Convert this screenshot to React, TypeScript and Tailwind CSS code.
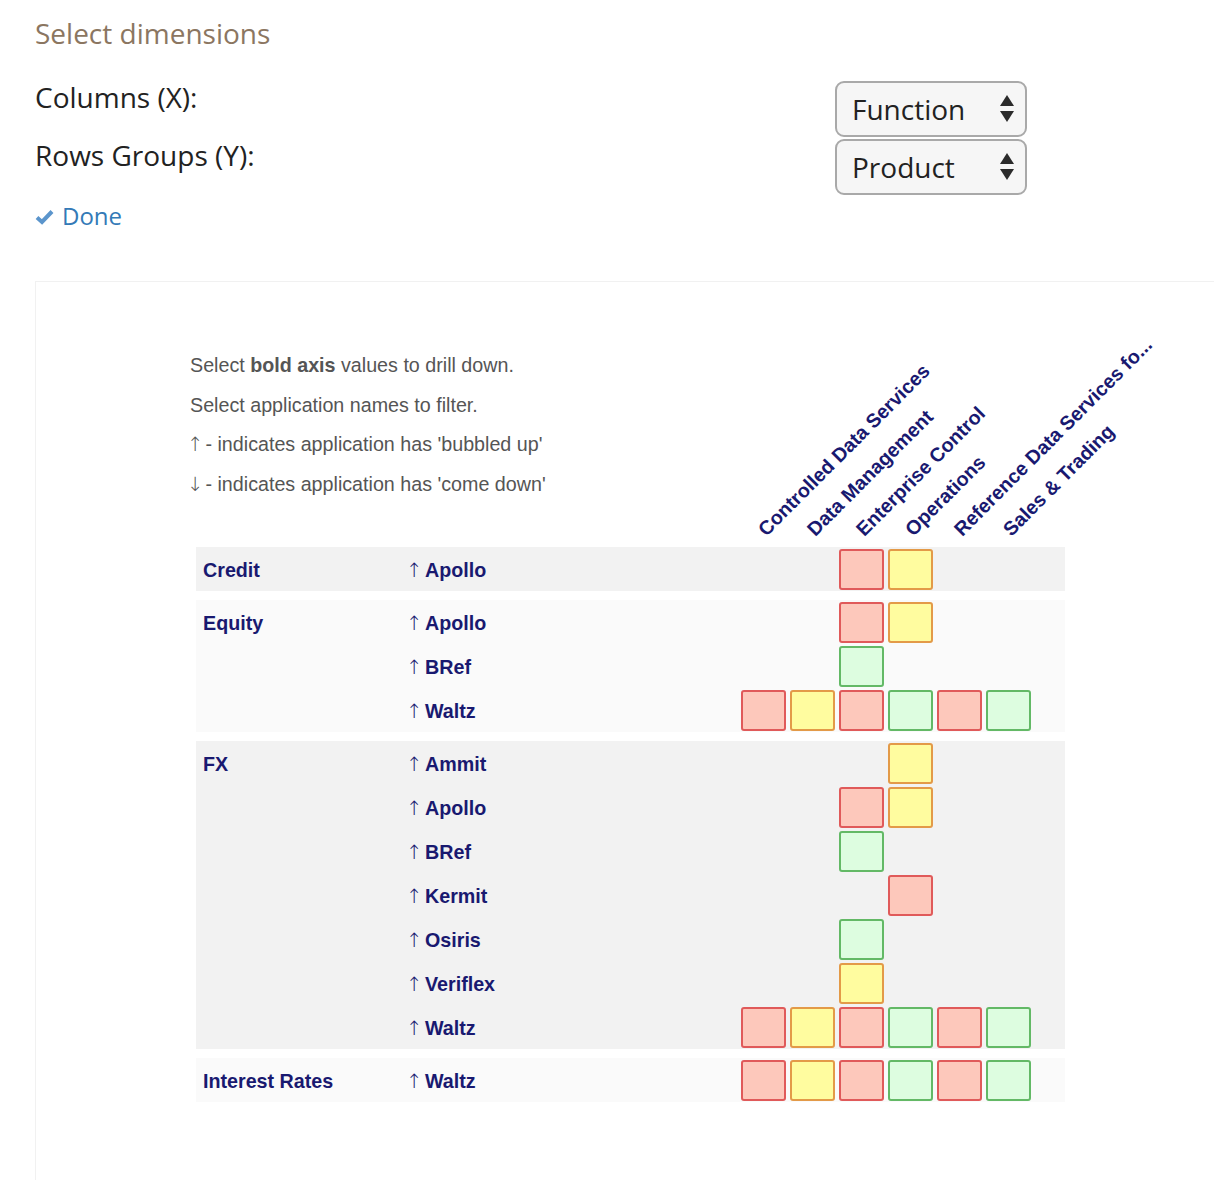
import React from "react";

type C = "r" | "y" | "g" | null;

const columns = [
  "Controlled Data Services",
  "Data Management",
  "Enterprise Control",
  "Operations",
  "Reference Data Services fo...",
  "Sales & Trading",
];

const W: C[] = ["r", "y", "r", "g", "r", "g"];

const groups: { name: string; bg: string; rows: { app: string; cells: C[] }[] }[] = [
  {
    name: "Credit",
    bg: "bg-[#f2f2f2]",
    rows: [{ app: "Apollo", cells: [null, null, "r", "y", null, null] }],
  },
  {
    name: "Equity",
    bg: "bg-[#fafafa]",
    rows: [
      { app: "Apollo", cells: [null, null, "r", "y", null, null] },
      { app: "BRef", cells: [null, null, "g", null, null, null] },
      { app: "Waltz", cells: W },
    ],
  },
  {
    name: "FX",
    bg: "bg-[#f2f2f2]",
    rows: [
      { app: "Ammit", cells: [null, null, null, "y", null, null] },
      { app: "Apollo", cells: [null, null, "r", "y", null, null] },
      { app: "BRef", cells: [null, null, "g", null, null, null] },
      { app: "Kermit", cells: [null, null, null, "r", null, null] },
      { app: "Osiris", cells: [null, null, "g", null, null, null] },
      { app: "Veriflex", cells: [null, null, "y", null, null, null] },
      { app: "Waltz", cells: W },
    ],
  },
  {
    name: "Interest Rates",
    bg: "bg-[#fafafa]",
    rows: [{ app: "Waltz", cells: W }],
  },
];

const cellClass: Record<string, string> = {
  r: "bg-[#fdc8bb] border-[#e05a5a]",
  y: "bg-[#fffc9f] border-[#e39a48]",
  g: "bg-[#ddfde0] border-[#63b966]",
};

function Arrows() {
  return (
    <svg width="16" height="30" viewBox="0 0 16 30" className="shrink-0">
      <polygon points="8,1 15,12 1,12" fill="#2b2b2b" />
      <polygon points="1,17 15,17 8,28" fill="#2b2b2b" />
    </svg>
  );
}

function Select({ value }: { value: string }) {
  return (
    <div className="flex h-[56px] w-[192px] items-center justify-between rounded-[9px] border-2 border-[#a9a9a9] bg-[#f6f6f6] pl-[15px] pr-[10px]">
      <span className="text-[28px] leading-[34px] text-[#222]">{value}</span>
      <Arrows />
    </div>
  );
}

const arrowFont = { fontFamily: '"DejaVu Sans", sans-serif' };

function Arrow({ ch }: { ch: string }) {
  return (
    <span
      className="inline-flex w-[10px] justify-center overflow-visible font-light"
      style={arrowFont}
    >
      {ch}
    </span>
  );
}

export default function App() {
  return (
    <div
      className="h-[1180px] w-[1214px] overflow-hidden bg-white"
      style={{ fontFamily: '"Open Sans", sans-serif' }}
    >
      <div className="pl-[35px]">
        <div className="pt-[13px] text-[28px] leading-[40px] text-[#8b7661]">
          Select dimensions
        </div>
        <div className="mt-[28px] flex w-[992px] flex-col gap-[2px]">
          <div className="flex items-start justify-between">
            <span className="text-[28px] leading-[32px] text-[#222]">Columns (X):</span>
            <Select value="Function" />
          </div>
          <div className="flex items-start justify-between">
            <span className="text-[28px] leading-[32px] text-[#222]">Rows Groups (Y):</span>
            <Select value="Product" />
          </div>
        </div>
        <div className="mt-[6px] flex items-center gap-[8px] text-[24px] leading-[30px] text-[#337ab7]">
          <svg width="19" height="16" viewBox="0 0 19 16" className="mt-[2px]">
            <path
              d="M2 8.5 L7 13 L17 2.5"
              fill="none"
              stroke="#5b95cc"
              strokeWidth="4"
              strokeLinejoin="miter"
            />
          </svg>
          <span>Done</span>
        </div>

        <div className="mt-[50px] h-[940px] w-[1200px] border-l border-t border-[#f1f1f1]">
          <div
            className="flex h-[258px] pl-[154px]"
            style={{ fontFamily: '"Liberation Sans", Arial, sans-serif' }}
          >
            <div className="w-[549px] pt-[64px] text-[19.7px] leading-[39.7px] text-[#555]">
              <div>
                Select <b>bold axis</b> values to drill down.
              </div>
              <div>Select application names to filter.</div>
              <div>
                <Arrow ch="↑" /> - indicates application has 'bubbled up'
              </div>
              <div>
                <Arrow ch="↓" /> - indicates application has 'come down'
              </div>
            </div>
            <div className="flex">
              {columns.map((c) => (
                <div key={c} className="flex w-[49px] flex-col justify-end">
                  <span className="mb-0 ml-[30px] block origin-bottom-left -rotate-45 whitespace-nowrap text-[19.7px] font-bold leading-[22px] text-[#191970]">
                    {c}
                  </span>
                </div>
              ))}
            </div>
          </div>

          <div
            className="ml-[160px] mt-[7px] flex w-[869px] flex-col gap-[9px]"
            style={{ fontFamily: '"Liberation Sans", Arial, sans-serif' }}
          >
            {groups.map((g) => (
              <div key={g.name} className={`flex ${g.bg}`}>
                <div className="flex h-[44px] w-[213px] items-center pl-[7px] pt-[4px] text-[19.7px] font-bold text-[#191970]">
                  {g.name}
                </div>
                <div className="flex flex-col">
                  {g.rows.map((r, i) => (
                    <div key={i} className="flex h-[44px] items-center">
                      <div className="flex w-[330px] items-center gap-[6px] pt-[4px] text-[19.7px] text-[#191970]">
                        <Arrow ch="↑" />
                        <span className="font-bold">{r.app}</span>
                      </div>
                      <div className="flex">
                        {r.cells.map((c, j) => (
                          <div key={j} className="flex h-[44px] w-[49px] items-center justify-center">
                            {c && (
                              <div
                                className={`h-[41px] w-[45px] rounded-[3px] border-2 ${cellClass[c]}`}
                              />
                            )}
                          </div>
                        ))}
                      </div>
                    </div>
                  ))}
                </div>
              </div>
            ))}
          </div>
        </div>
      </div>
    </div>
  );
}
